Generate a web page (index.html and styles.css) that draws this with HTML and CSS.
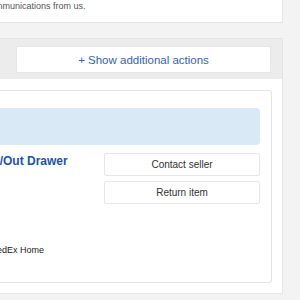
FILE: index.html
```html
<!DOCTYPE html>
<html lang="en">
<head>
    <meta charset="UTF-8">
    <meta name="viewport" content="width=device-width, initial-scale=1.0">
    <title>Orders</title>
    <link rel="stylesheet" href="styles.css">
</head>
<body>
    <div class="page">
        <div class="card notice">
            <p>receive communications from us.</p>
        </div>

        <div class="card orders">
            <div class="orders-head">
                <button class="more-btn">+ Show additional actions</button>
            </div>
            <div class="orders-body">
                <div class="order">
                    <div class="order-alert"></div>
                    <div class="order-row">
                        <div class="order-info">
                            <a href="#" class="order-title">Slide In/Out Drawer</a>
                            <p class="order-ship">Ship via FedEx Home</p>
                        </div>
                        <div class="order-actions">
                            <button class="action-btn">Contact seller</button>
                            <button class="action-btn">Return item</button>
                        </div>
                    </div>
                </div>
            </div>
        </div>
    </div>
</body>
</html>
```

FILE: styles.css
```css
body {
    font-family: "Liberation Sans", Arial, sans-serif;
    margin: 0;
    padding: 0;
    background-color: #f3f3f3;
    overflow: hidden;
}

.page {
    width: 349px;
    margin-left: -66px;
    margin-top: -12px;
}

.card {
    background: white;
    border: 1px solid #e4e4e4;
}

.notice {
    padding: 12px 12px 10px 19px;
    border-top: none;
}

.notice p {
    margin: 0;
    font-size: 9px;
    line-height: 12px;
    color: #555;
}

.orders {
    margin-top: 15px;
}

.orders-head {
    background-color: #ececec;
    padding: 7px 11px 6px 0;
    display: flex;
    justify-content: flex-end;
}

.more-btn {
    width: 255px;
    height: 27px;
    background: white;
    border: 1px solid #e6e6e6;
    border-radius: 2px;
    font-family: inherit;
    font-size: 11.5px;
    color: #3563b0;
    cursor: pointer;
}

.orders-body {
    padding: 11px 10px 10px 10px;
}

.order {
    border: 1px solid #e3e3e3;
    border-radius: 3px;
    padding: 17px 11px 26px 11px;
}

.order-alert {
    height: 37px;
    background-color: #d9eaf6;
    border-radius: 4px;
}

.order-row {
    display: flex;
    justify-content: space-between;
    margin-top: 8px;
}

.order-title {
    display: block;
    font-size: 12px;
    line-height: 16px;
    font-weight: bold;
    color: #1d52a8;
    text-decoration: none;
}

.order-ship {
    margin: 75px 0 0 0;
    font-size: 9px;
    line-height: 12px;
    color: #222;
}

.order-actions {
    width: 156px;
    display: flex;
    flex-direction: column;
    gap: 5px;
}

.action-btn {
    height: 23px;
    background: white;
    border: 1px solid #e6e6e6;
    border-radius: 2px;
    font-family: inherit;
    font-size: 10px;
    color: #333;
    cursor: pointer;
}
```
